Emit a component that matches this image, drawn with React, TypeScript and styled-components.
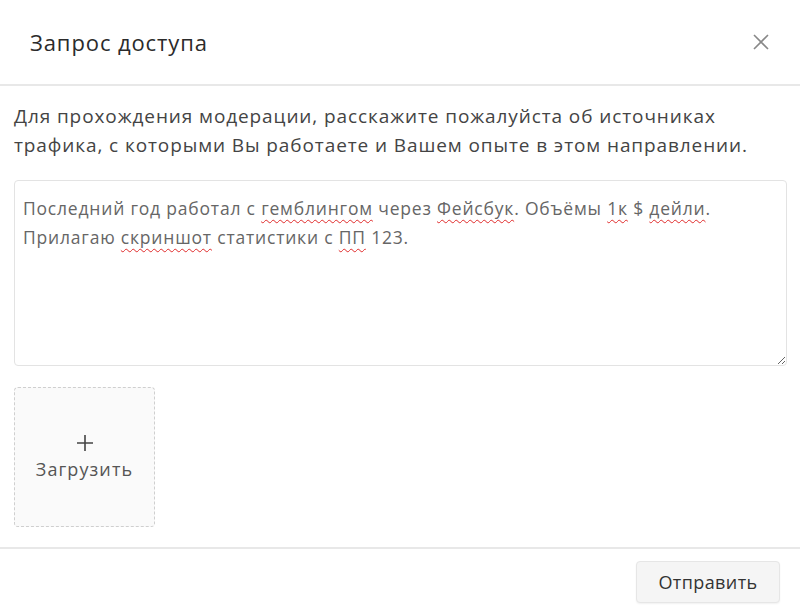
import styled, { createGlobalStyle } from 'styled-components';

const GlobalStyle = createGlobalStyle`
  html, body {
    margin: 0;
    padding: 0;
    background: #ffffff;
  }
  body {
    font-family: "Open Sans", "Noto Sans", "Liberation Sans", sans-serif;
    color: #333;
  }
`;

const Modal = styled.div`
  width: 800px;
  height: 615px;
  display: flex;
  flex-direction: column;
  background: #fff;
`;

const Header = styled.div`
  height: 84px;
  display: flex;
  align-items: center;
  justify-content: space-between;
  padding: 0 28px 0 30px;
  border-bottom: 2px solid #e8e8e8;
  box-sizing: content-box;
`;

const Title = styled.h2`
  margin: 0;
  font-size: 22px;
  font-weight: 400;
  color: #2b2b2b;
  letter-spacing: 0.9px;
`;

const CloseBtn = styled.button`
  border: none;
  background: none;
  padding: 0;
  width: 22px;
  height: 22px;
  cursor: pointer;
  display: flex;
  align-items: center;
  justify-content: center;
`;

const Body = styled.div`
  flex: 1;
  padding: 16px 13px 0 14px;
  display: flex;
  flex-direction: column;
`;

const Hint = styled.p`
  margin: 0;
  font-size: 19px;
  line-height: 29px;
  color: #444;
  letter-spacing: 0.9px;
`;

const TextBox = styled.div`
  margin-top: 20px;
  height: 186px;
  box-sizing: border-box;
  border: 1px solid #e3e3e3;
  border-radius: 4px;
  padding: 13px 8px;
  font-size: 17.5px;
  line-height: 29px;
  color: #666;
  resize: vertical;
  overflow: auto;
  letter-spacing: 0.8px;
`;

const Misspelled = styled.span`
  text-decoration: underline wavy #e02b2b;
  text-decoration-thickness: 1px;
  text-underline-offset: 4px;
`;

const Upload = styled.div`
  margin-top: 21px;
  width: 141px;
  height: 140px;
  box-sizing: border-box;
  border: 1px dashed #cfcfcf;
  border-radius: 4px;
  background: #fafafa;
  display: flex;
  flex-direction: column;
  align-items: center;
  justify-content: center;
  gap: 5px;
  color: #555;
  cursor: pointer;
`;

const UploadLabel = styled.span`
  font-size: 18px;
  letter-spacing: 1.1px;
`;

const Footer = styled.div`
  height: 66px;
  border-top: 2px solid #e8e8e8;
  display: flex;
  align-items: center;
  justify-content: flex-end;
  padding: 0 20px;
`;

const SendBtn = styled.button`
  font-family: inherit;
  width: 144px;
  height: 42px;
  border: 1px solid #e6e6e6;
  border-radius: 4px;
  background: #f5f5f5;
  font-size: 18px;
  letter-spacing: 0.4px;
  color: #333;
  cursor: pointer;
  box-shadow: 0 1px 2px rgba(0, 0, 0, 0.06);
`;

export default function App() {
  return (
    <>
      <GlobalStyle />
      <Modal>
        <Header>
          <Title>Запрос доступа</Title>
          <CloseBtn aria-label="Закрыть">
            <svg width="18" height="18" viewBox="0 0 18 18">
              <path d="M2 2L16 16M16 2L2 16" stroke="#888" strokeWidth="1.6" fill="none" />
            </svg>
          </CloseBtn>
        </Header>
        <Body>
          <Hint>
            Для прохождения модерации, расскажите пожалуйста об источниках трафика, с которыми Вы
            работаете и Вашем опыте в этом направлении.
          </Hint>
          <TextBox>
            Последний год работал с <Misspelled>гемблингом</Misspelled> через{' '}
            <Misspelled>Фейсбук</Misspelled>. Объёмы <Misspelled>1к</Misspelled> ${' '}
            <Misspelled>дейли</Misspelled>.
            <br />
            Прилагаю <Misspelled>скриншот</Misspelled> статистики с <Misspelled>ПП</Misspelled> 123.
          </TextBox>
          <Upload>
            <svg width="18" height="18" viewBox="0 0 18 18">
              <path d="M9 1V17M1 9H17" stroke="#444" strokeWidth="1.6" fill="none" />
            </svg>
            <UploadLabel>Загрузить</UploadLabel>
          </Upload>
        </Body>
        <Footer>
          <SendBtn>Отправить</SendBtn>
        </Footer>
      </Modal>
    </>
  );
}
